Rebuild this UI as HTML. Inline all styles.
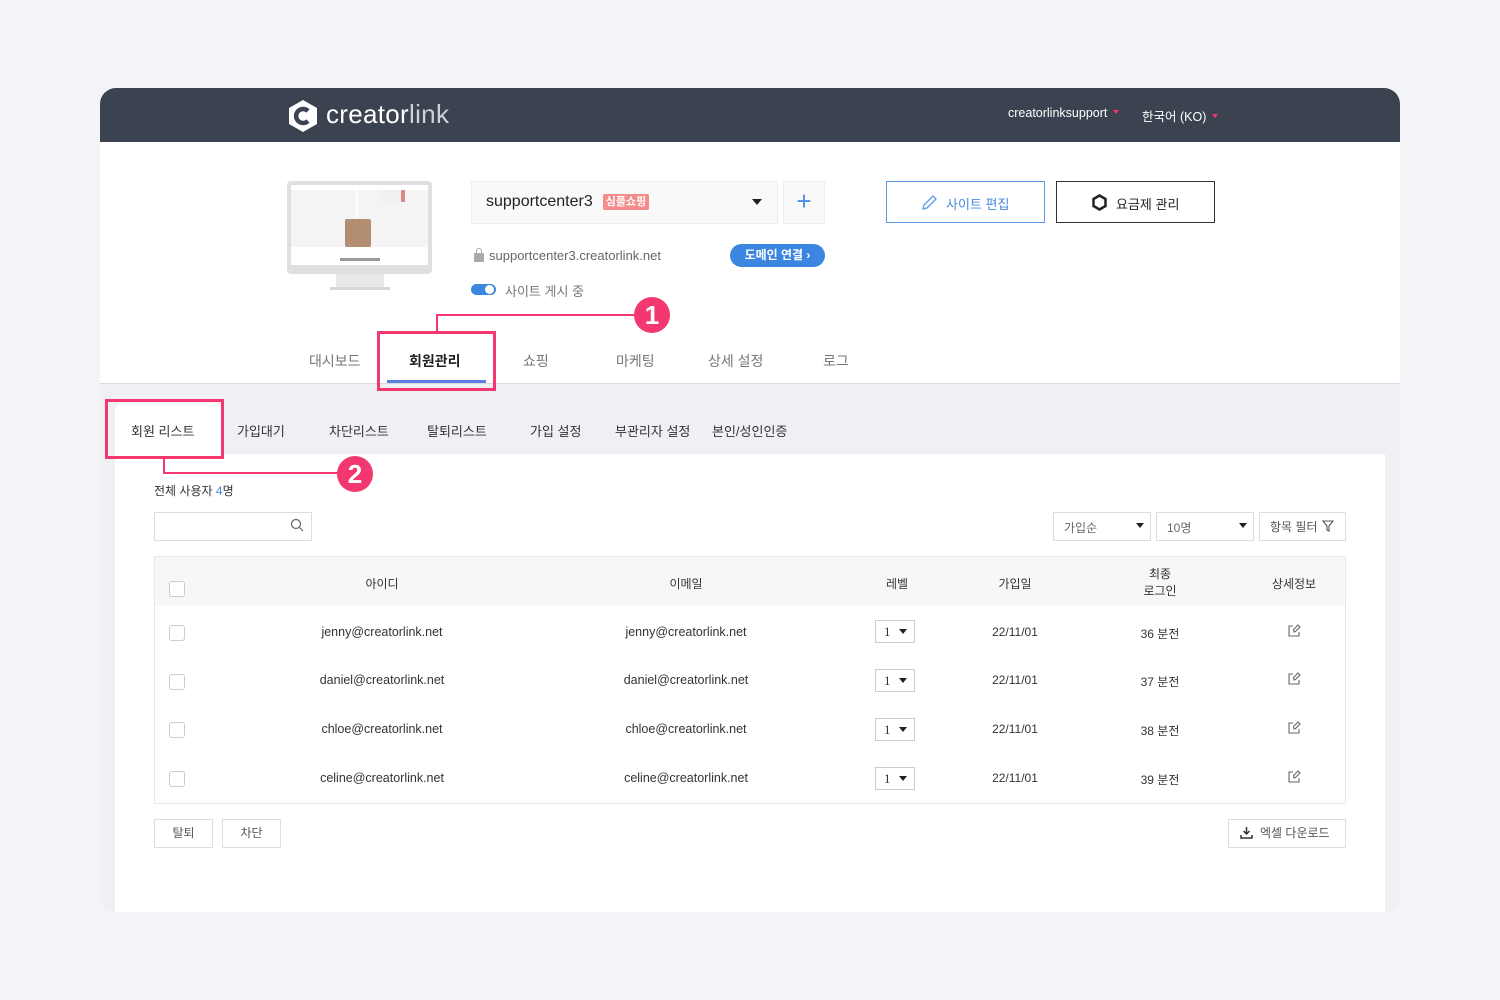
<!DOCTYPE html>
<html><head><meta charset="utf-8"><style>
*{box-sizing:border-box;margin:0;padding:0}
body{width:1500px;height:1000px;background:#f3f4f8;font-family:"Liberation Sans","Noto Sans CJK KR",sans-serif;position:relative;overflow:hidden;color:#333}
.a{position:absolute}
.card{left:100px;top:88px;width:1300px;height:824px;border-radius:16px;overflow:hidden;background:#eff0f4}
.hdr{left:0;top:0;width:1300px;height:54px;background:#3c4350}
.top{left:0;top:54px;width:1300px;height:242px;background:#fff;border-bottom:1px solid #d8d9de}
.panel{left:15px;top:366px;width:1270px;height:470px;background:#fff}
.t{font-size:13px;color:#333;white-space:nowrap}
.box{border:1px solid #ddd;background:#fff}
.pink{border:3px solid #f2386f}
.pl{background:#f2386f}
.num{width:36px;height:36px;border-radius:50%;background:#f2386f;color:#fff;font-weight:bold;font-size:26px;text-align:center;line-height:36px}
.cb{width:16px;height:16px;border:1px solid #ccc;border-radius:3px;background:#fff}
.sel{border:1px solid #ccc;background:#fff;font-family:"Liberation Serif",serif;font-size:13px;padding-left:8px;line-height:22px}
.sel:after{content:"";position:absolute;right:7px;top:8px;border:4px solid transparent;border-top:5px solid #222}
.c{text-align:center}
.dd{display:inline-block;width:0;height:0;border:3px solid transparent;border-top:4px solid #f2386f;margin-left:6px;vertical-align:middle}
</style></head><body>
<div class="a card">
 <div class="a hdr"></div>
 <div class="a top"></div>
 <div class="a panel"></div>
 <div class="a" style="left:15px;top:315px;width:107px;height:60px;background:#fff;border-radius:8px 8px 0 0"></div>
</div>
<!-- logo -->
<svg class="a" style="left:288px;top:99px" width="30" height="34" viewBox="0 0 30 34"><polygon points="15,1 29,9 29,25 15,33 1,25 1,9" fill="#fff"/><path d="M20 12 A7 7 0 1 0 20 22" stroke="#3c4350" stroke-width="4.5" fill="none"/></svg>
<div class="a" style="left:326px;top:99px;font-size:26px;color:#fff;letter-spacing:0.3px">creator<span style="color:#cfd2d8">link</span></div>
<div class="a t" style="left:1008px;top:106px;color:#fff;font-size:12.5px">creatorlinksupport<span class="dd"></span></div>
<div class="a t" style="left:1142px;top:106px;color:#fff;font-size:12.5px">한국어 (KO)<span class="dd"></span></div>
<!-- monitor -->
<div class="a" style="left:287px;top:181px;width:145px;height:93px;background:#e0e0e2;border-radius:4px"></div>
<div class="a" style="left:291px;top:185px;width:137px;height:80px;background:#f4f4f4"></div>
<div class="a" style="left:291px;top:185px;width:137px;height:5px;background:#fff"></div>
<div class="a" style="left:291px;top:247px;width:137px;height:18px;background:#fff"></div>
<div class="a" style="left:340px;top:258px;width:40px;height:3px;background:#999"></div>
<div class="a" style="left:356px;top:190px;width:2px;height:28px;background:#fff"></div>
<div class="a" style="left:380px;top:190px;width:25px;height:12px;background:#f0f0f0;border-right:4px solid #d88"></div>
<div class="a" style="left:345px;top:219px;width:26px;height:28px;background:#a77a5a;border-radius:2px;opacity:.85"></div>
<div class="a" style="left:336px;top:274px;width:48px;height:14px;background:#e8e8ea"></div>
<div class="a" style="left:330px;top:287px;width:60px;height:3px;background:#d8d8da"></div>
<!-- site selector -->
<div class="a" style="left:471px;top:181px;width:307px;height:43px;background:#f9f9f9;border:1px solid #eee"></div>
<div class="a t" style="left:486px;top:193px;font-size:16px;color:#222">supportcenter3</div>
<div class="a" style="left:603px;top:194px;width:46px;height:16px;background:#f58b8b;border-radius:2px;color:#fff;font-size:11px;text-align:center;line-height:16px;font-weight:bold">심플쇼핑</div>
<div class="a" style="left:752px;top:199px;border:5px solid transparent;border-top:6px solid #222"></div>
<div class="a" style="left:783px;top:181px;width:42px;height:43px;background:#f9f9f9;border:1px solid #eee;color:#4a90e2;font-size:26px;text-align:center;line-height:38px;font-weight:300">+</div>
<div class="a" style="left:474px;top:253px;width:10px;height:9px;background:#aaa;border-radius:1px"></div>
<div class="a" style="left:476px;top:248px;width:6px;height:7px;border:1.5px solid #aaa;border-radius:3px 3px 0 0"></div>
<div class="a t" style="left:489px;top:248px;color:#666">supportcenter3.creatorlink.net</div>
<div class="a" style="left:730px;top:244px;width:95px;height:23px;border-radius:12px;background:#3b86e0;color:#fff;font-size:12px;font-weight:bold;text-align:center;line-height:23px">도메인 연결 ›</div>
<div class="a" style="left:471px;top:284px;width:25px;height:11px;border-radius:6px;background:#3b86e0"></div>
<div class="a" style="left:485px;top:285px;width:9px;height:9px;border-radius:50%;background:#fff"></div>
<div class="a t" style="left:505px;top:281px;color:#777">사이트 게시 중</div>
<!-- buttons -->
<div class="a" style="left:886px;top:181px;width:159px;height:42px;border:1px solid #5a9ae8;background:#fff"></div>
<svg class="a" style="left:921px;top:194px" width="17" height="17" viewBox="0 0 17 17"><path d="M2 15 L3 11 L12 2 L15 5 L6 14 Z" fill="none" stroke="#5a9ae8" stroke-width="1.3"/></svg>
<div class="a t" style="left:946px;top:194px;color:#4a8ae0">사이트 편집</div>
<div class="a" style="left:1056px;top:181px;width:159px;height:42px;border:1.5px solid #333;background:#fff"></div>
<svg class="a" style="left:1091px;top:194px" width="17" height="17" viewBox="0 0 17 17"><polygon points="8.5,1.5 14.5,5 14.5,12 8.5,15.5 2.5,12 2.5,5" fill="none" stroke="#222" stroke-width="2.5"/></svg>
<div class="a t" style="left:1116px;top:194px;color:#222">요금제 관리</div>
<!-- main tabs -->
<div class="a t" style="left:309px;top:351px;font-size:14px;color:#777">대시보드</div>
<div class="a t" style="left:409px;top:351px;font-size:14px;color:#222;font-weight:bold">회원관리</div>
<div class="a" style="left:387px;top:380px;width:99px;height:3px;background:#5b7fe0"></div>
<div class="a t" style="left:523px;top:351px;font-size:14px;color:#777">쇼핑</div>
<div class="a t" style="left:616px;top:351px;font-size:14px;color:#777">마케팅</div>
<div class="a t" style="left:708px;top:351px;font-size:14px;color:#777">상세 설정</div>
<div class="a t" style="left:823px;top:351px;font-size:14px;color:#777">로그</div>
<!-- annotations -->
<div class="a pink" style="left:377px;top:331px;width:119px;height:60px"></div>
<div class="a pl" style="left:436px;top:314px;width:200px;height:2px"></div>
<div class="a pl" style="left:436px;top:314px;width:2px;height:18px"></div>
<div class="a num" style="left:634px;top:297px">1</div>
<div class="a pink" style="left:105px;top:399px;width:119px;height:60px"></div>
<div class="a pl" style="left:163px;top:457px;width:2px;height:17px"></div>
<div class="a pl" style="left:163px;top:472px;width:175px;height:2px"></div>
<div class="a num" style="left:337px;top:456px">2</div>
<!-- sub tabs -->
<div class="a t" style="left:131px;top:421px">회원 리스트</div>
<div class="a t" style="left:237px;top:421px">가입대기</div>
<div class="a t" style="left:329px;top:421px">차단리스트</div>
<div class="a t" style="left:427px;top:421px">탈퇴리스트</div>
<div class="a t" style="left:530px;top:421px">가입 설정</div>
<div class="a t" style="left:615px;top:421px">부관리자 설정</div>
<div class="a t" style="left:712px;top:421px">본인/성인인증</div>
<div class="a t" style="left:154px;top:482px;font-size:12px">전체 사용자 <span style="color:#4a8ae0">4</span>명</div>
<div class="a box" style="left:154px;top:512px;width:158px;height:29px;border-color:#ddd"></div>
<svg class="a" style="left:290px;top:518px" width="15" height="15" viewBox="0 0 15 15"><circle cx="6" cy="6" r="4.5" fill="none" stroke="#666" stroke-width="1.2"/><path d="M9.5 9.5 L13 13" stroke="#666" stroke-width="1.2"/></svg>
<div class="a box" style="left:1053px;top:512px;width:98px;height:29px"></div>
<div class="a t" style="left:1064px;top:519px;font-size:12px;color:#666">가입순</div>
<div class="a" style="left:1136px;top:523px;border:4px solid transparent;border-top:5px solid #222"></div>
<div class="a box" style="left:1156px;top:512px;width:98px;height:29px"></div>
<div class="a t" style="left:1167px;top:519px;font-size:12px;color:#666">10명</div>
<div class="a" style="left:1239px;top:523px;border:4px solid transparent;border-top:5px solid #222"></div>
<div class="a box" style="left:1259px;top:512px;width:87px;height:29px"></div>
<div class="a t" style="left:1270px;top:518px;font-size:12px;color:#555">항목 필터</div>
<svg class="a" style="left:1322px;top:520px" width="12" height="12" viewBox="0 0 12 12"><path d="M1 1 H11 L7 6 V11 L5 10 V6 Z" fill="none" stroke="#555" stroke-width="1.1"/></svg>
<!-- table -->
<div class="a" style="left:154px;top:556px;width:1192px;height:248px;border:1px solid #e8e8e8;background:#fff"></div>
<div class="a" style="left:155px;top:557px;width:1190px;height:49px;background:#f7f7f9"></div>
<div class="a cb" style="left:169px;top:581px"></div>
<div class="a t c" style="left:282px;top:575px;width:200px;font-size:12px">아이디</div>
<div class="a t c" style="left:586px;top:575px;width:200px;font-size:12px">이메일</div>
<div class="a t c" style="left:867px;top:575px;width:60px;font-size:12px">레벨</div>
<div class="a t c" style="left:985px;top:575px;width:60px;font-size:12px">가입일</div>
<div class="a c" style="left:1130px;top:566px;width:60px;font-size:12px;line-height:17px">최종<br>로그인</div>
<div class="a t c" style="left:1264px;top:575px;width:60px;font-size:12px">상세정보</div>
<div class="a cb" style="left:169px;top:625px"></div><div class="a t c" style="left:282px;top:625px;width:200px;font-size:12.5px">jenny@creatorlink.net</div><div class="a t c" style="left:586px;top:625px;width:200px;font-size:12.5px">jenny@creatorlink.net</div><div class="a sel" style="left:875px;top:620px;width:40px;height:23px">1</div><div class="a t c" style="left:985px;top:625px;width:60px;font-size:12px">22/11/01</div><div class="a t c" style="left:1130px;top:625px;width:60px;font-size:12px">36 분전</div>
<div class="a cb" style="left:169px;top:674px"></div><div class="a t c" style="left:282px;top:673px;width:200px;font-size:12.5px">daniel@creatorlink.net</div><div class="a t c" style="left:586px;top:673px;width:200px;font-size:12.5px">daniel@creatorlink.net</div><div class="a sel" style="left:875px;top:669px;width:40px;height:23px">1</div><div class="a t c" style="left:985px;top:673px;width:60px;font-size:12px">22/11/01</div><div class="a t c" style="left:1130px;top:673px;width:60px;font-size:12px">37 분전</div>
<div class="a cb" style="left:169px;top:722px"></div><div class="a t c" style="left:282px;top:722px;width:200px;font-size:12.5px">chloe@creatorlink.net</div><div class="a t c" style="left:586px;top:722px;width:200px;font-size:12.5px">chloe@creatorlink.net</div><div class="a sel" style="left:875px;top:718px;width:40px;height:23px">1</div><div class="a t c" style="left:985px;top:722px;width:60px;font-size:12px">22/11/01</div><div class="a t c" style="left:1130px;top:722px;width:60px;font-size:12px">38 분전</div>
<div class="a cb" style="left:169px;top:771px"></div><div class="a t c" style="left:282px;top:771px;width:200px;font-size:12.5px">celine@creatorlink.net</div><div class="a t c" style="left:586px;top:771px;width:200px;font-size:12.5px">celine@creatorlink.net</div><div class="a sel" style="left:875px;top:767px;width:40px;height:23px">1</div><div class="a t c" style="left:985px;top:771px;width:60px;font-size:12px">22/11/01</div><div class="a t c" style="left:1130px;top:771px;width:60px;font-size:12px">39 분전</div>
<svg class="a" style="left:1287px;top:624px" width="14" height="14" viewBox="0 0 14 14"><path d="M6 2 H2 V12 H12 V8 M7 8 L8.5 7.5 L13 3 L11 1 L6.5 5.5 Z" fill="none" stroke="#666" stroke-width="1.1"/></svg>
<svg class="a" style="left:1287px;top:672px" width="14" height="14" viewBox="0 0 14 14"><path d="M6 2 H2 V12 H12 V8 M7 8 L8.5 7.5 L13 3 L11 1 L6.5 5.5 Z" fill="none" stroke="#666" stroke-width="1.1"/></svg>
<svg class="a" style="left:1287px;top:721px" width="14" height="14" viewBox="0 0 14 14"><path d="M6 2 H2 V12 H12 V8 M7 8 L8.5 7.5 L13 3 L11 1 L6.5 5.5 Z" fill="none" stroke="#666" stroke-width="1.1"/></svg>
<svg class="a" style="left:1287px;top:770px" width="14" height="14" viewBox="0 0 14 14"><path d="M6 2 H2 V12 H12 V8 M7 8 L8.5 7.5 L13 3 L11 1 L6.5 5.5 Z" fill="none" stroke="#666" stroke-width="1.1"/></svg>
<!-- bottom buttons -->
<div class="a box t c" style="left:154px;top:819px;width:59px;height:29px;line-height:27px;font-size:12px;color:#555">탈퇴</div>
<div class="a box t c" style="left:222px;top:819px;width:59px;height:29px;line-height:27px;font-size:12px;color:#555">차단</div>
<div class="a box t" style="left:1228px;top:819px;width:118px;height:29px;line-height:27px;font-size:12px;color:#555;padding-left:31px">엑셀 다운로드</div>
<svg class="a" style="left:1240px;top:826px" width="13" height="13" viewBox="0 0 13 13"><path d="M6.5 1 V8 M3.5 5 L6.5 8 L9.5 5" stroke="#333" stroke-width="1.5" fill="none"/><path d="M1 9 V12 H12 V9" stroke="#333" stroke-width="1.5" fill="none"/></svg>
</body></html>
